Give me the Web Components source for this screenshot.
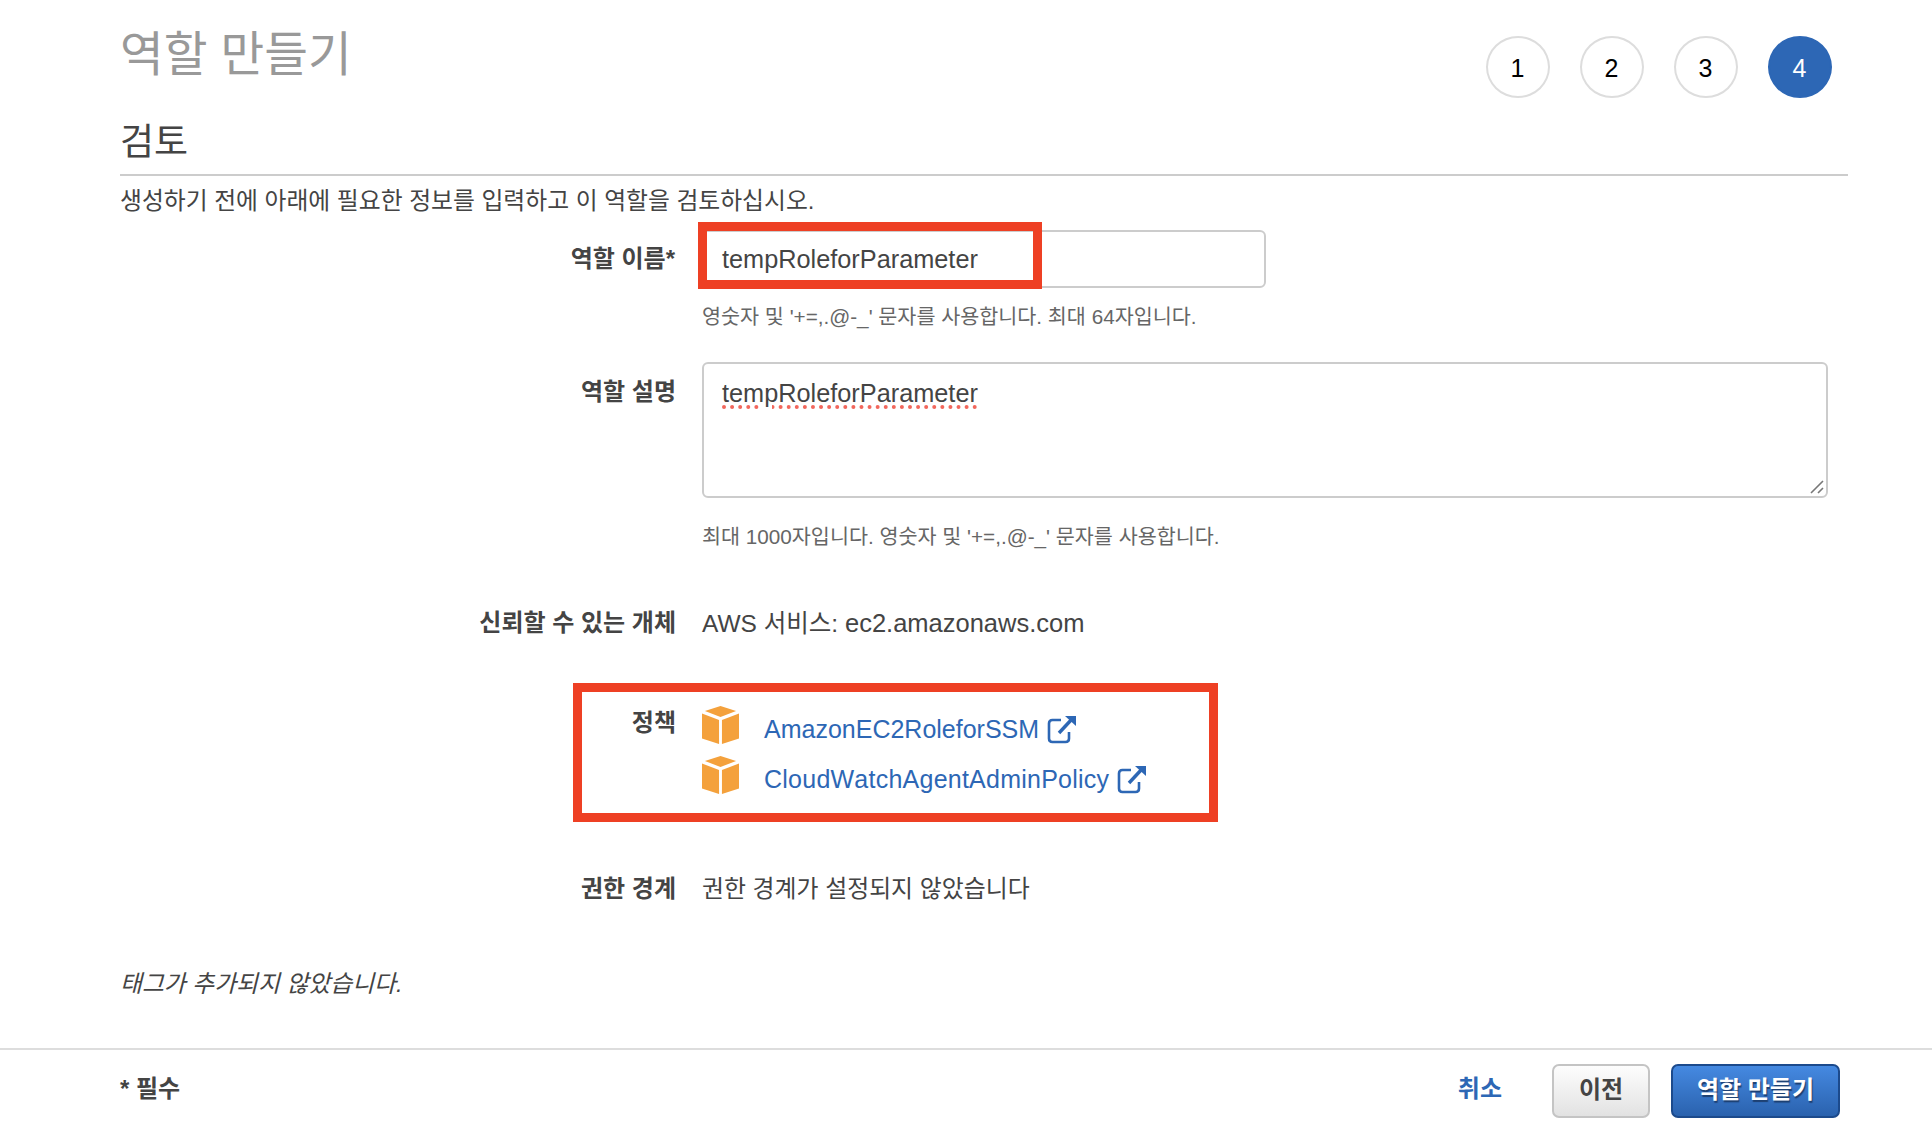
<!DOCTYPE html>
<html lang="ko">
<head>
<meta charset="utf-8">
<title>역할 만들기</title>
<style>
  html, body { margin: 0; background: #fff; overflow: hidden; }
  body {
    height: 1124px;
    font-family: "Liberation Sans", "Noto Sans CJK KR", sans-serif;
    color: #444;
  }
</style>
</head>
<body>
<wizard-header heading="역할 만들기" sub="검토" current="4" total="4"></wizard-header>

<review-form>
  <form-row label="역할 이름*" kind="input">
    <text-box value="tempRoleforParameter"></text-box>
    <span slot="hint">영숫자 및 '+=,.@-_' 문자를 사용합니다. 최대 64자입니다.</span>
  </form-row>
  <form-row label="역할 설명" kind="area" style="margin-top:31px">
    <text-box value="tempRoleforParameter" multiline></text-box>
    <span slot="hint">최대 1000자입니다. 영숫자 및 '+=,.@-_' 문자를 사용합니다.</span>
  </form-row>
  <form-row label="신뢰할 수 있는 개체" style="margin-top:57px">AWS 서비스: <span style="font-size:25.5px">ec2.amazonaws.com</span></form-row>
  <form-row label="정책" kind="policies" style="margin-top:67px">
    <policy-link>AmazonEC2RoleforSSM</policy-link>
    <policy-link style="letter-spacing:.24px">CloudWatchAgentAdminPolicy</policy-link>
  </form-row>
  <form-row label="권한 경계" style="margin-top:68px;font-size:23.9px">권한 경계가 설정되지 않았습니다</form-row>
</review-form>

<wizard-footer></wizard-footer>

<script>
class WizardHeader extends HTMLElement {
  constructor() {
    super();
    this.attachShadow({ mode: "open" });
    this.shadowRoot.innerHTML = `
      <style>
        :host { display: block; padding: 0 84px 0 120px; }
        .top { display: flex; justify-content: space-between; height: 108px; box-sizing: border-box; padding-right: 16px; }
        h1 { margin: 25px 0 0; font-size: 47.5px; line-height: 60px; font-weight: 400; color: #999; }
        h2 { margin: 0; font-size: 37px; line-height: 50px; font-weight: 400; color: #444; border-bottom: 2px solid #ccc; height: 56px; padding-top: 10px; }
        .steps { display: flex; gap: 30px; padding-top: 36px; }
        p { margin: 10px 0 0; font-size: 23.8px; line-height: 30px; color: #444; }
      </style>
      <div class="top"><h1></h1><div class="steps"></div></div>
      <h2></h2>
      <p>생성하기 전에 아래에 필요한 정보를 입력하고 이 역할을 검토하십시오.</p>
    `;
  }

  connectedCallback() {
    this.shadowRoot.querySelector("h1").textContent = this.getAttribute("heading");
    this.shadowRoot.querySelector("h2").textContent = this.getAttribute("sub");
    const steps = this.shadowRoot.querySelector(".steps");
    const current = Number(this.getAttribute("current"));
    for (let i = 1; i <= Number(this.getAttribute("total")); i++) {
      const dot = document.createElement("step-dot");
      dot.textContent = i;
      if (i === current) dot.setAttribute("active", "");
      steps.appendChild(dot);
    }
  }
}

class StepDot extends HTMLElement {
  constructor() {
    super();
    this.attachShadow({ mode: "open" });
    this.shadowRoot.innerHTML = `
      <style>
        :host {
          display: flex;
          align-items: center;
          justify-content: center;
          width: 64px;
          height: 62px;
          box-sizing: border-box;
          border: 2px solid #ddd;
          border-radius: 50%;
          font-size: 25px;
          color: #000;
          padding: 3px 1px 0 0;
        }
        :host([active]) { background: #2d67b5; border-color: #2d67b5; color: #fff; }
      </style>
      <slot></slot>
    `;
  }
}

class ReviewForm extends HTMLElement {
  constructor() {
    super();
    this.attachShadow({ mode: "open" });
    this.shadowRoot.innerHTML = `
      <style>
        :host { display: block; padding: 14px 105px 0 120px; }
        .tags { margin-top: 65px; font-size: 23.8px; line-height: 30px; font-style: italic; color: #444; }
      </style>
      <slot></slot>
      <div class="tags">태그가 추가되지 않았습니다.</div>
    `;
  }
}

class FormRow extends HTMLElement {
  constructor() {
    super();
    this.attachShadow({ mode: "open" });
    this.shadowRoot.innerHTML = `
      <style>
        :host { display: grid; grid-template-columns: 556px 1fr; column-gap: 26px; font-size: 24.5px; line-height: 30px; color: #444; position: relative; }
        .label { text-align: right; font-weight: 700; font-size: 24px; }
        :host([kind="input"]) .label { padding: 14px 1px 0 0; }
        :host([kind="area"]) .label { padding-top: 15px; }
        :host([kind="policies"]) .label { padding-top: 2px; }
        .hint { font-size: 20.7px; line-height: 28px; color: #666; margin-top: 15px; }
        :host([kind="area"]) .hint { margin-top: 25px; }
        .hint:not(.on) { display: none; }
        .mark { position: absolute; box-sizing: border-box; border: 9px solid #ee4024; display: none; pointer-events: none; }
        :host([kind="input"]) .mark { display: block; left: 578px; top: -8px; width: 344px; height: 67px; }
        :host([kind="policies"]) .mark { display: block; left: 453px; top: -23px; width: 645px; height: 139px; }
      </style>
      <div class="label"></div>
      <div class="value"><slot></slot><div class="hint"><slot name="hint"></slot></div></div>
      <div class="mark"></div>
    `;
  }

  connectedCallback() {
    this.shadowRoot.querySelector(".label").textContent = this.getAttribute("label");
    if (this.querySelector('[slot="hint"]')) {
      this.shadowRoot.querySelector(".hint").classList.add("on");
    }
  }
}

class TextBox extends HTMLElement {
  constructor() {
    super();
    this.attachShadow({ mode: "open" });
    this.shadowRoot.innerHTML = `
      <style>
        :host {
          display: block;
          position: relative;
          box-sizing: border-box;
          width: 564px;
          height: 58px;
          padding: 12px 18px;
          background: #fff;
          border: 2px solid #ccc;
          border-radius: 6px;
          font-size: 25.3px;
          line-height: 30px;
          color: #444;
        }
        :host([multiline]) { width: 1126px; height: 136px; padding: 14px 18px; }
        :host([multiline]) span {
          text-decoration: underline dotted #f2675c 3.5px;
          text-underline-offset: 3px;
        }
        svg { position: absolute; right: 1px; bottom: 1px; display: none; }
        :host([multiline]) svg { display: block; }
      </style>
      <span></span>
      <svg width="16" height="16" viewBox="0 0 16 16" fill="none" stroke="#777" stroke-width="1.6">
        <path d="M2 14 14 2M9 14l5-5"/>
      </svg>
    `;
  }

  connectedCallback() {
    this.shadowRoot.querySelector("span").textContent = this.getAttribute("value");
  }
}

class PolicyLink extends HTMLElement {
  constructor() {
    super();
    this.attachShadow({ mode: "open" });
    this.shadowRoot.innerHTML = `
      <style>
        :host { display: flex; align-items: flex-start; height: 50px; color: #2d67b5; font-size: 25px; line-height: 30px; font-kerning: none; }
        svg { flex: none; }
        .cube { width: 37px; height: 38px; margin: 0 25px 0 0; }
        .text { margin-top: 8px; }
        .ext { width: 30px; height: 30px; margin: 8px 0 0 8px; }
      </style>
      <svg class="cube" viewBox="0 0 38 38" preserveAspectRatio="none" fill="#f4a13c">
        <path d="M19 0 35 5 19 11 3 5Z"/>
        <path d="M0 7.5 17.5 14V38L0 32.5Z"/>
        <path d="M38 7.5 20.5 14V38L38 32.5Z"/>
      </svg>
      <span class="text"><slot></slot></span>
      <svg class="ext" viewBox="0 0 30 30" fill="none" stroke="#2d67b5" stroke-width="2.6">
        <path d="M14 6H5.5Q2 6 2 9.500V24.500Q2 28 5.500 28H18.500Q22 28 22 24.500V18"/>
        <path d="M12 19 25 5" stroke-width="3.4"/>
        <path d="M18 2H29V12Z" fill="#2d67b5" stroke="none"/>
      </svg>
    `;
  }
}

class WizardFooter extends HTMLElement {
  constructor() {
    super();
    this.attachShadow({ mode: "open" });
    this.shadowRoot.innerHTML = `
      <style>
        :host {
          display: flex;
          align-items: center;
          margin-top: 49px;
          height: 76px;
          box-sizing: content-box;
          border-top: 2px solid #ddd;
          padding: 0 92px 0 120px;
          font-size: 24px;
          font-weight: 700;
          color: #444;
        }
        .req { flex: 1; }
        .cancel { color: #2d67b5; margin-right: 50px; }
        .btn {
          display: flex;
          align-items: center;
          justify-content: center;
          box-sizing: border-box;
          height: 54px;
          border-radius: 7px;
          margin-top: 6px;
          padding-bottom: 7px;
        }
        .req, .cancel { margin-bottom: 4px; }
        .prev {
          width: 98px;
          margin-right: 21px;
          border: 2px solid #c4c4c4;
          background: linear-gradient(#fdfdfd, #e2e2e2);
        }
        .go {
          width: 169px;
          border: 2px solid #1c4a8c;
          background: linear-gradient(#4589e1, #2a62ae);
          color: #fff;
          text-shadow: 1px 2px 1px #1d3f70;
        }
      </style>
      <span class="req">* 필수</span>
      <span class="cancel">취소</span>
      <span class="btn prev">이전</span>
      <span class="btn go">역할 만들기</span>
    `;
  }
}

customElements.define("wizard-header", WizardHeader);
customElements.define("step-dot", StepDot);
customElements.define("review-form", ReviewForm);
customElements.define("form-row", FormRow);
customElements.define("text-box", TextBox);
customElements.define("policy-link", PolicyLink);
customElements.define("wizard-footer", WizardFooter);
</script>
</body>
</html>
